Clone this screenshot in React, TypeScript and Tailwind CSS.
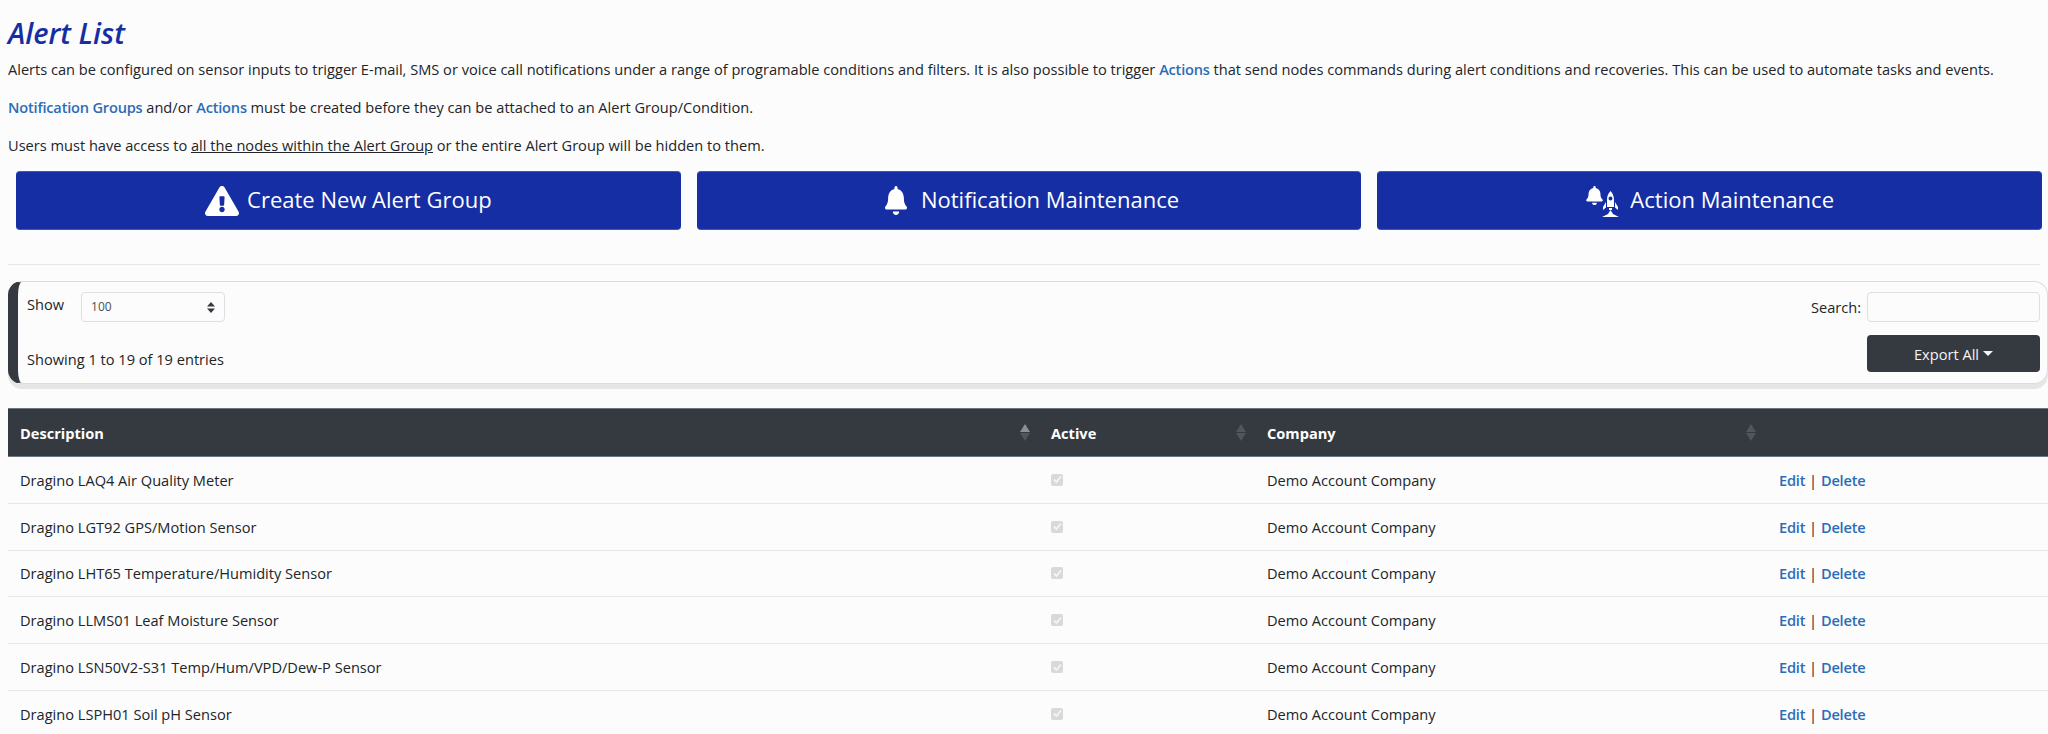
import { FaBell, FaExclamationTriangle } from 'react-icons/fa';

const rows = [
  'Dragino LAQ4 Air Quality Meter',
  'Dragino LGT92 GPS/Motion Sensor',
  'Dragino LHT65 Temperature/Humidity Sensor',
  'Dragino LLMS01 Leaf Moisture Sensor',
  'Dragino LSN50V2-S31 Temp/Hum/VPD/Dew-P Sensor',
  'Dragino LSPH01 Soil pH Sensor',
];

const SortIcon = ({ up = false }: { up?: boolean }) => (
  <svg width="10" height="17" viewBox="0 0 10 17" className="absolute right-[11px] top-[15px]">
    <path d="M5 0 L10 8 L0 8 Z" fill={up ? '#8b9095' : '#51565c'} />
    <path d="M0 9 L10 9 L5 17 Z" fill="#51565c" />
  </svg>
);

const Link = ({ children }: { children: string }) => (
  <a className="text-[#2b6cb8] font-semibold tracking-[-0.2px]">{children}</a>
);

const RocketIcon = () => (
  <svg width="17" height="26" viewBox="0 0 17 26" fill="white">
    <path d="M8.5 0 C6 2.5 5 5.5 5 9 L5 16 L12 16 L12 9 C12 5.5 11 2.5 8.5 0 Z M8.5 5.5 A2 2 0 1 1 8.5 9.5 A2 2 0 1 1 8.5 5.5 Z" fillRule="evenodd" />
    <path d="M4 11 L1 16 L1 19 L4 16.5 Z M13 11 L16 16 L16 19 L13 16.5 Z" />
    <path d="M7 17 L10 17 L10 19 L7 19 Z" />
    <path d="M8.5 19 L11 23 L17 26 L0 26 L6 23 Z" />
  </svg>
);

const ActionButton = ({ icon, label }: { icon: React.ReactNode; label: string }) => (
  <button className="flex-1 h-[59px] flex items-center justify-center gap-[8px] rounded-[4px] bg-[#162ea3] border-y border-[#2f62b4] text-white text-[22px]">
    {icon}
    <span className="-mt-[3px]">{label}</span>
  </button>
);

export default function App() {
  return (
    <div className="h-[734px] overflow-hidden bg-[#fcfcfc] px-[8px] text-[14.6px] leading-[24px] text-[#212529] font-['Open_Sans',sans-serif]">
      <h1 className="pt-[14px] text-[29px] leading-[38px] italic font-semibold text-[#162ea3]">Alert List</h1>

      <p className="mt-[5px]">
        Alerts can be configured on sensor inputs to trigger E-mail, SMS or voice call notifications under a range of programable conditions and filters. It is also possible to trigger <Link>Actions</Link> that send nodes commands during alert conditions and recoveries. This can be used to automate tasks and events.
      </p>
      <p className="mt-[14px]">
        <Link>Notification Groups</Link> and/or <Link>Actions</Link> must be created before they can be attached to an Alert Group/Condition.
      </p>
      <p className="mt-[14px]">
        Users must have access to <span className="underline">all the nodes within the Alert Group</span> or the entire Alert Group will be hidden to them.
      </p>

      <div className="mt-[14px] pl-[8px] -mr-[2px] flex gap-[16px]">
        <ActionButton icon={<FaExclamationTriangle size={34} />} label="Create New Alert Group" />
        <ActionButton
          icon={<FaBell preserveAspectRatio="none" className="w-[22px] h-[29px] ml-[6px] mr-[6px]" />}
          label="Notification Maintenance"
        />
        <ActionButton
          icon={
            <span className="flex items-start mr-[3px]">
              <FaBell size={19} className="-mt-[4px]" />
              <span className="-ml-[2px] mt-[1px] -mb-[6px]"><RocketIcon /></span>
            </span>
          }
          label="Action Maintenance"
        />
      </div>

      <hr className="mt-[34px] border-[#e6e6e6]" />

      <div className="mt-[16px] h-[103px] rounded-[14px] border border-[#dcdcdc] border-l-[10px] border-l-[#343a40] shadow-[0_5px_0_#e6e6e6] pl-[9px] pr-[7px] pt-[10px] -mr-[8px]">
        <div className="flex justify-between">
          <div className="flex items-start gap-[17px]">
            <span>Show</span>
            <div className="w-[144px] h-[30px] px-[9px] flex items-center justify-between rounded-[4px] border border-[#dcdfe3] text-[12px] text-[#495057]">
              100
              <svg width="8" height="11" viewBox="0 0 8 11">
                <path d="M4 0 L8 4.5 L0 4.5 Z M0 6.5 L8 6.5 L4 11 Z" fill="#343a40" />
              </svg>
            </div>
          </div>
          <div className="flex items-center gap-[6px]">
            <span>Search:</span>
            <input className="w-[173px] h-[30px] rounded-[4px] border border-[#dcdfe3]" />
          </div>
        </div>
        <div className="mt-[13px] flex justify-between">
          <span className="mt-[12px]">Showing 1 to 19 of 19 entries</span>
          <button className="w-[173px] h-[37px] rounded-[4px] bg-[#343a40] text-[#f4f4f4] flex items-center justify-center gap-[4px]">
            Export All
            <span className="border-x-[5px] border-x-transparent border-t-[5px] border-t-[#f4f4f4]"></span>
          </button>
        </div>
      </div>

      <table className="mt-[24px] w-[2040px] table-fixed border-collapse">
        <thead>
          <tr className="h-[48px] bg-[#343a40] text-white text-left border-y border-y-[#6c7680]">
            <th className="relative w-[1033px] px-[12px] font-bold">Description<SortIcon up /></th>
            <th className="relative w-[216px] px-[10px] font-bold">Active<SortIcon /></th>
            <th className="relative w-[510px] px-[10px] font-bold">Company<SortIcon /></th>
            <th className="px-[10px]"></th>
          </tr>
        </thead>
        <tbody>
          {rows.map((name) => (
            <tr key={name} className="h-[46.8px] border-b border-b-[#e6e6e6]">
              <td className="px-[12px]">{name}</td>
              <td className="px-[10px]">
                <span className="flex items-center justify-center w-[12px] h-[12px] rounded-[2px] bg-[#d9d9d9]">
                  <svg width="9" height="9" viewBox="0 0 9 9">
                    <path d="M1 4.5 L3.5 7 L8 1.5" stroke="#f5f5f5" strokeWidth="1.8" fill="none" />
                  </svg>
                </span>
              </td>
              <td className="px-[10px]">Demo Account Company</td>
              <td className="px-[12px]">
                <Link>Edit</Link> | <Link>Delete</Link>
              </td>
            </tr>
          ))}
        </tbody>
      </table>
    </div>
  );
}
